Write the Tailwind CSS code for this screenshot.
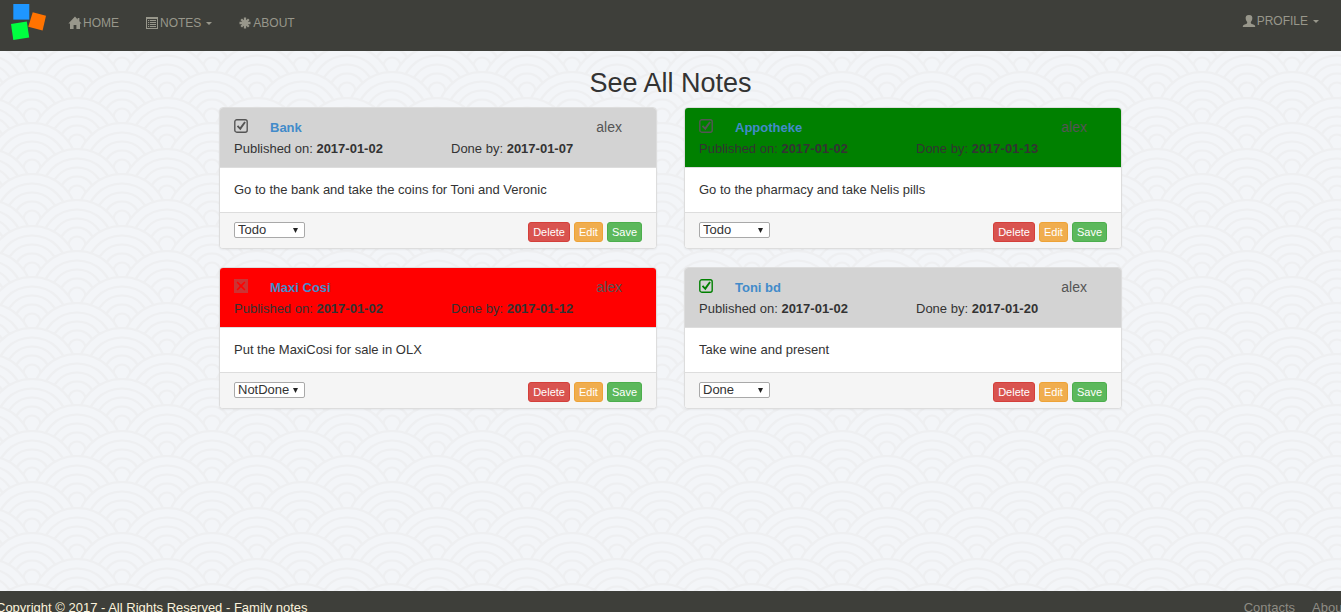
<!DOCTYPE html>
<html lang="en">
<head>
<meta charset="utf-8">
<meta name="viewport" content="width=device-width, initial-scale=1">
<title>Family notes</title>
<script src="https://cdn.jsdelivr.net/npm/@tailwindcss/browser@4"></script>
</head>
<body class="relative isolate flex h-screen flex-col overflow-hidden bg-[#f3f5f8] font-['Liberation_Sans',Arial,sans-serif] text-[13px] leading-5 text-[#333]">

<!-- Wave backdrop -->
<svg class="absolute inset-0 -z-10 size-full" aria-hidden="true">
  <defs>
    <g id="wave" fill="#f3f5f8" stroke="#eeeff1" stroke-width="2.2">
      <circle r="45"/><circle r="35.5"/><circle r="26.5"/><circle r="17.5"/><circle r="8.5"/>
    </g>
    <g id="row"><use href="#wave" x="-90"/><use href="#wave"/><use href="#wave" x="90"/><use href="#wave" x="180"/></g>
    <pattern id="waves" width="90" height="205" patternUnits="userSpaceOnUse" patternTransform="translate(32 117)">
      <use href="#row" y="-51"/><use href="#row" x="-45" y="-26"/>
      <use href="#row"/><use href="#row" x="-45" y="26"/>
      <use href="#row" y="51"/><use href="#row" x="-45" y="77"/>
      <use href="#row" y="102"/><use href="#row" x="-45" y="128"/>
      <use href="#row" y="154"/><use href="#row" x="-45" y="179"/>
      <use href="#row" y="205"/><use href="#row" x="-45" y="231"/>
      <use href="#row" y="256"/>
    </pattern>
    <symbol id="check" viewBox="0 0 14 14">
      <rect x=".8" y=".8" width="12.4" height="12.4" rx="2" fill="none" stroke="currentColor" stroke-width="1.4"/>
      <path d="M2.8 7.4 4.2 6.2 6 8.2 10.3 2.4 11.8 3.4 6.4 11.2Z" fill="currentColor"/>
    </symbol>
    <symbol id="cross" viewBox="0 0 14 14">
      <path fill-rule="evenodd" d="M0 0H14V14H0ZM3.6 2.6 2.6 3.6 5.8 7 2.6 10.4 3.6 11.4 7 8.2 10.4 11.4 11.4 10.4 8.2 7 11.4 3.6 10.4 2.6 7 5.8Z" fill="currentColor"/>
    </symbol>
  </defs>
  <rect width="100%" height="100%" fill="url(#waves)"/>
</svg>

<nav class="flex h-[51px] shrink-0 items-start bg-[#3e3f3a] pr-[22px] pl-2.5 text-xs text-[#98978b]">
  <a href="#" aria-label="Family notes" class="mt-1">
    <svg class="h-9 w-9" viewBox="0 0 36 36">
      <path fill="#1e96ff" d="M3.3 0H19.3V15.6H3.3Z"/>
      <path fill="#ff7300" d="M22.7 8.2 36 11.8 32.6 26.5 18.3 22.7Z"/>
      <path fill="#00ff40" d="M1 20 16.8 17.4 19.2 33.4 3.3 36Z"/>
    </svg>
  </a>
  <a href="#" class="mt-[15px] ml-[22px] flex items-center gap-px">
    <svg class="h-3.5 w-3.5" viewBox="0 0 14 14" fill="currentColor"><path d="M7 .6 .4 7.6H2V13H5.6V9H8.4V13H12V7.6H13.6L11.4 5.2V2H9.6V3.4Z"/></svg>HOME</a>
  <button type="button" class="mt-[15px] ml-[26px] flex items-center gap-px">
    <svg class="h-3.5 w-3.5" viewBox="0 0 14 14" fill="currentColor"><path fill-rule="evenodd" d="M1 1H13V13H1ZM2 3V12H12V3Z"/><path d="M3 4H4.2V5H3ZM5 4H11V5H5ZM3 6H4.2V7H3ZM5 6H11V7H5ZM3 8H4.2V9H3ZM5 8H11V9H5ZM3 10H4.2V11H3ZM5 10H11V11H5Z"/></svg>NOTES
    <svg class="ml-1 h-1 w-1.5" viewBox="0 0 6 4" fill="currentColor"><path d="M0 1H6L3 4Z"/></svg>
  </button>
  <a href="#" class="mt-[15px] ml-[26px] flex items-center gap-px">
    <svg class="h-3.5 w-3.5" viewBox="0 0 14 14" stroke="currentColor" stroke-width="2.3"><path d="M7 1.5V12.5M1.5 7H12.5M3.2 3.2 10.8 10.8M10.8 3.2 3.2 10.8"/></svg>ABOUT</a>
  <button type="button" class="mt-[13px] ml-auto flex items-center gap-px">
    <svg class="h-3.5 w-3.5" viewBox="0 0 14 14" fill="currentColor"><path d="M7 1C9.8 1 10.6 2.4 10.3 4.8 10.1 6.5 9.2 7.4 8.8 8 8.7 9.4 9.2 9.8 10.7 10.3 12.7 11 13.2 11.4 13.2 13H.8C.8 11.4 1.3 11 3.3 10.3 4.8 9.8 5.3 9.4 5.2 8 4.8 7.4 3.9 6.5 3.7 4.8 3.4 2.4 4.2 1 7 1Z"/></svg>PROFILE
    <svg class="ml-1 h-1 w-1.5" viewBox="0 0 6 4" fill="currentColor"><path d="M0 1H6L3 4Z"/></svg>
  </button>
</nav>

<main class="mx-auto w-full max-w-[903px] flex-1">
  <h1 class="mt-4 mb-2 text-center text-[27px] leading-8">See All Notes</h1>
  <div class="grid grid-cols-2 gap-x-[27px] gap-y-[18px]">

    <article class="overflow-hidden rounded border border-[#ddd] bg-white shadow-xs">
      <header class="grid grid-cols-2 border-b border-[#ddd] bg-[#d3d3d3] px-3.5 pt-[9px] pb-2 leading-[21px]">
        <div class="flex items-center"><svg class="mr-[22px] mb-1 size-3.5 text-[#555]"><use href="#check"/></svg><a href="#" class="font-bold text-[#428bca]">Bank</a></div>
        <div class="pr-5 text-right text-sm leading-[21px] text-[#555]">alex</div>
        <div>Published on: <b>2017-01-02</b></div>
        <div class="pl-[13px]">Done by: <b>2017-01-07</b></div>
      </header>
      <p class="px-3.5 py-3">Go to the bank and take the coins for Toni and Veronic</p>
      <footer class="flex h-9 items-start gap-1 border-t border-[#ddd] bg-[#f5f5f5] px-3.5 pt-[9px]">
        <span class="relative mr-auto flex"><select aria-label="Status of Bank" class="h-4 w-[71px] appearance-none rounded-xs border border-[#a9a9a9] bg-white pl-[3px] leading-[14px]"><option>Todo</option><option>Done</option><option>NotDone</option></select><svg class="pointer-events-none absolute top-1.5 right-[7px] h-[5px] w-[5px]" viewBox="0 0 5 5"><path d="M0 0H5L2.5 5Z" fill="#222"/></svg></span>
        <button type="button" class="h-5 rounded-[3px] border border-[#d43f3a] bg-[#d9534f] px-1 text-[11px] leading-[18px] text-white">Delete</button>
        <button type="button" class="h-5 rounded-[3px] border border-[#eea236] bg-[#f0ad4e] px-1 text-[11px] leading-[18px] text-white">Edit</button>
        <button type="button" class="h-5 rounded-[3px] border border-[#4cae4c] bg-[#5cb85c] px-1 text-[11px] leading-[18px] text-white">Save</button>
      </footer>
    </article>

    <article class="overflow-hidden rounded border border-[#ddd] bg-white shadow-xs">
      <header class="grid grid-cols-2 border-b border-[#ddd] bg-[#008000] px-3.5 pt-[9px] pb-2 leading-[21px]">
        <div class="flex items-center"><svg class="mr-[22px] mb-1 size-3.5 text-[#555]"><use href="#check"/></svg><a href="#" class="font-bold text-[#428bca]">Appotheke</a></div>
        <div class="pr-5 text-right text-sm leading-[21px] text-[#555]">alex</div>
        <div>Published on: <b>2017-01-02</b></div>
        <div class="pl-[13px]">Done by: <b>2017-01-13</b></div>
      </header>
      <p class="px-3.5 py-3">Go to the pharmacy and take Nelis pills</p>
      <footer class="flex h-9 items-start gap-1 border-t border-[#ddd] bg-[#f5f5f5] px-3.5 pt-[9px]">
        <span class="relative mr-auto flex"><select aria-label="Status of Appotheke" class="h-4 w-[71px] appearance-none rounded-xs border border-[#a9a9a9] bg-white pl-[3px] leading-[14px]"><option>Todo</option><option>Done</option><option>NotDone</option></select><svg class="pointer-events-none absolute top-1.5 right-[7px] h-[5px] w-[5px]" viewBox="0 0 5 5"><path d="M0 0H5L2.5 5Z" fill="#222"/></svg></span>
        <button type="button" class="h-5 rounded-[3px] border border-[#d43f3a] bg-[#d9534f] px-1 text-[11px] leading-[18px] text-white">Delete</button>
        <button type="button" class="h-5 rounded-[3px] border border-[#eea236] bg-[#f0ad4e] px-1 text-[11px] leading-[18px] text-white">Edit</button>
        <button type="button" class="h-5 rounded-[3px] border border-[#4cae4c] bg-[#5cb85c] px-1 text-[11px] leading-[18px] text-white">Save</button>
      </footer>
    </article>

    <article class="overflow-hidden rounded border border-[#ddd] bg-white shadow-xs">
      <header class="grid grid-cols-2 border-b border-[#ddd] bg-[#ff0000] px-3.5 pt-[9px] pb-2 leading-[21px]">
        <div class="flex items-center"><svg class="mr-[22px] mb-1 size-3.5 text-[#cc3333]"><use href="#cross"/></svg><a href="#" class="font-bold text-[#428bca]">Maxi Cosi</a></div>
        <div class="pr-5 text-right text-sm leading-[21px] text-[#555]">alex</div>
        <div>Published on: <b>2017-01-02</b></div>
        <div class="pl-[13px]">Done by: <b>2017-01-12</b></div>
      </header>
      <p class="px-3.5 py-3">Put the MaxiCosi for sale in OLX</p>
      <footer class="flex h-9 items-start gap-1 border-t border-[#ddd] bg-[#f5f5f5] px-3.5 pt-[9px]">
        <span class="relative mr-auto flex"><select aria-label="Status of Maxi Cosi" class="h-4 w-[71px] appearance-none rounded-xs border border-[#a9a9a9] bg-white pl-[3px] leading-[14px]"><option>Todo</option><option>Done</option><option selected>NotDone</option></select><svg class="pointer-events-none absolute top-1.5 right-[7px] h-[5px] w-[5px]" viewBox="0 0 5 5"><path d="M0 0H5L2.5 5Z" fill="#222"/></svg></span>
        <button type="button" class="h-5 rounded-[3px] border border-[#d43f3a] bg-[#d9534f] px-1 text-[11px] leading-[18px] text-white">Delete</button>
        <button type="button" class="h-5 rounded-[3px] border border-[#eea236] bg-[#f0ad4e] px-1 text-[11px] leading-[18px] text-white">Edit</button>
        <button type="button" class="h-5 rounded-[3px] border border-[#4cae4c] bg-[#5cb85c] px-1 text-[11px] leading-[18px] text-white">Save</button>
      </footer>
    </article>

    <article class="overflow-hidden rounded border border-[#ddd] bg-white shadow-xs">
      <header class="grid grid-cols-2 border-b border-[#ddd] bg-[#d3d3d3] px-3.5 pt-[9px] pb-2 leading-[21px]">
        <div class="flex items-center"><svg class="mr-[22px] mb-1 size-3.5 text-[#008000]"><use href="#check"/></svg><a href="#" class="font-bold text-[#428bca]">Toni bd</a></div>
        <div class="pr-5 text-right text-sm leading-[21px] text-[#555]">alex</div>
        <div>Published on: <b>2017-01-02</b></div>
        <div class="pl-[13px]">Done by: <b>2017-01-20</b></div>
      </header>
      <p class="px-3.5 py-3">Take wine and present</p>
      <footer class="flex h-9 items-start gap-1 border-t border-[#ddd] bg-[#f5f5f5] px-3.5 pt-[9px]">
        <span class="relative mr-auto flex"><select aria-label="Status of Toni bd" class="h-4 w-[71px] appearance-none rounded-xs border border-[#a9a9a9] bg-white pl-[3px] leading-[14px]"><option>Todo</option><option selected>Done</option><option>NotDone</option></select><svg class="pointer-events-none absolute top-1.5 right-[7px] h-[5px] w-[5px]" viewBox="0 0 5 5"><path d="M0 0H5L2.5 5Z" fill="#222"/></svg></span>
        <button type="button" class="h-5 rounded-[3px] border border-[#d43f3a] bg-[#d9534f] px-1 text-[11px] leading-[18px] text-white">Delete</button>
        <button type="button" class="h-5 rounded-[3px] border border-[#eea236] bg-[#f0ad4e] px-1 text-[11px] leading-[18px] text-white">Edit</button>
        <button type="button" class="h-5 rounded-[3px] border border-[#4cae4c] bg-[#5cb85c] px-1 text-[11px] leading-[18px] text-white">Save</button>
      </footer>
    </article>
  </div>
</main>

<footer class="-mx-1 flex h-[21px] shrink-0 justify-between bg-[#3e3f3a] pt-[7px] whitespace-nowrap">
  <p class="text-[#fcf3dc]">Copyright © 2017 - All Rights Reserved - Family notes</p>
  <div class="-mr-px flex gap-[17px] text-[#8e8c84]"><a href="#">Contacts</a><a href="#">About</a></div>
</footer>
</body>
</html>
